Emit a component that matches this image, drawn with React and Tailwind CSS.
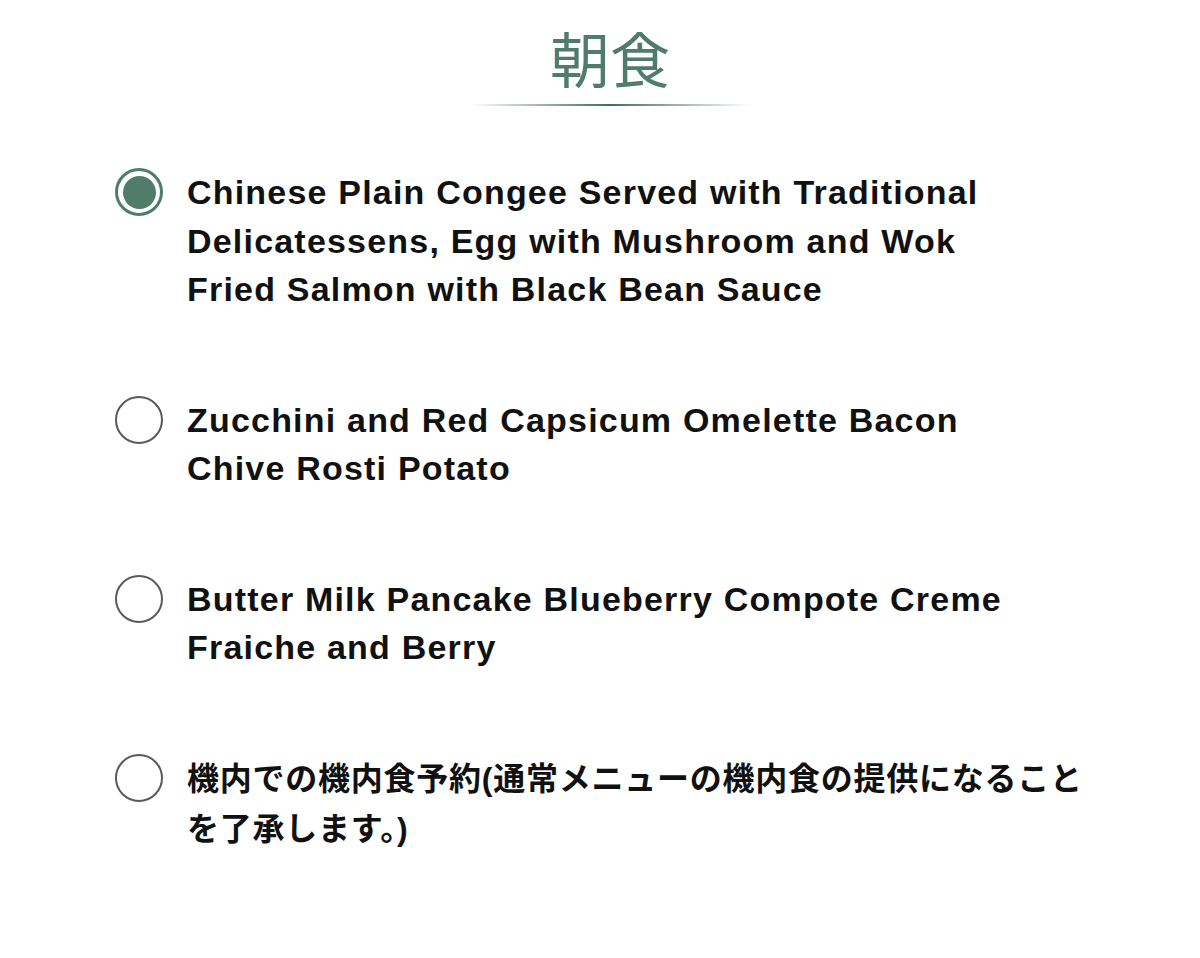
import { useState } from "react";

const meals = [
  {
    id: "congee",
    label:
      "Chinese Plain Congee Served with Traditional Delicatessens, Egg with Mushroom and Wok Fried Salmon with Black Bean Sauce",
  },
  { id: "omelette", label: "Zucchini and Red Capsicum Omelette Bacon Chive Rosti Potato" },
  { id: "pancake", label: "Butter Milk Pancake Blueberry Compote Creme Fraiche and Berry" },
  {
    id: "onboard",
    label: "機内での機内食予約(通常メニューの機内食の提供になることを了承します。)",
    ja: true,
  },
];

function Radio({ checked }) {
  return checked ? (
    <span className="flex h-[48px] w-[48px] shrink-0 items-center justify-center rounded-full border-[3px] border-[#4f7d69] bg-white">
      <span className="h-[33px] w-[33px] rounded-full bg-[#4f7d69]" />
    </span>
  ) : (
    <span className="h-[48px] w-[48px] shrink-0 rounded-full border-2 border-[#5a5a5a] bg-white" />
  );
}

export default function App() {
  const [selected, setSelected] = useState("congee");

  return (
    <div
      className="min-h-[958px] w-[1200px] bg-white text-[#111]"
      style={{ fontFamily: '"Liberation Sans", "Noto Sans CJK JP", sans-serif' }}
    >
      <div className="flex flex-col items-center pl-[20px] pt-[17px]">
        <h2
          className="text-[60px] leading-[80px] text-[#4f7d69]"
          style={{ fontFamily: '"Noto Sans CJK JP", sans-serif' }}
        >
          朝食
        </h2>
        <div className="mt-[7px] h-[2px] w-[280px] bg-gradient-to-r from-transparent via-[#3f6e59] to-transparent" />
      </div>

      <ul className="mt-[62px] flex flex-col gap-[82px] pl-[115px] pr-[80px]">
        {meals.map((m) => (
          <li
            key={m.id}
            className="flex cursor-pointer items-start gap-[24px]"
            onClick={() => setSelected(m.id)}
          >
            <Radio checked={selected === m.id} />
            {m.ja ? (
              <span className="max-w-[910px] text-[32px] font-bold leading-[50px] tracking-[0.75px]">
                {m.label}
              </span>
            ) : (
              <span className="max-w-[860px] text-[34px] font-bold leading-[48.5px] tracking-[1.2px]">
                {m.label}
              </span>
            )}
          </li>
        ))}
      </ul>
    </div>
  );
}
